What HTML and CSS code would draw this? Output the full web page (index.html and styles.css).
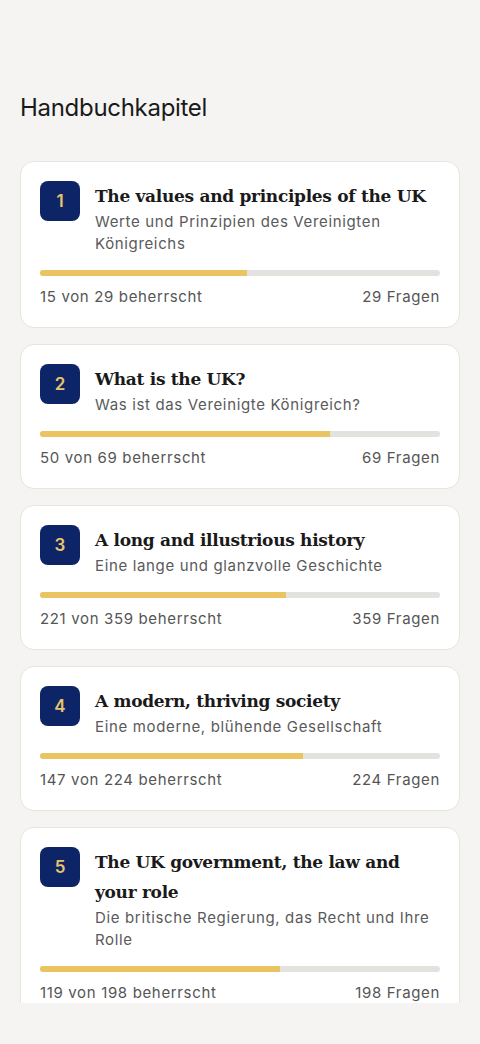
FILE: index.html
```html
<!DOCTYPE html>
<html lang="de">
<head>
<meta charset="utf-8">
<link rel="stylesheet" href="styles.css">
</head>
<body>
<div class="screen">
  <main class="scroll">
    <h1 class="heading">Handbuchkapitel</h1>
    <div class="list">
      <section class="card">
        <div class="head">
          <div class="badge">1</div>
          <div class="texts">
            <div class="title">The values and principles of the UK</div>
            <div class="sub">Werte und Prinzipien des Vereinigten Königreichs</div>
          </div>
        </div>
        <div class="bar"><div class="fill" style="width:51.72%"></div></div>
        <div class="foot"><span>15 von 29 beherrscht</span><span>29 Fragen</span></div>
      </section>
      <section class="card">
        <div class="head">
          <div class="badge">2</div>
          <div class="texts">
            <div class="title">What is the UK?</div>
            <div class="sub">Was ist das Vereinigte Königreich?</div>
          </div>
        </div>
        <div class="bar"><div class="fill" style="width:72.46%"></div></div>
        <div class="foot"><span>50 von 69 beherrscht</span><span>69 Fragen</span></div>
      </section>
      <section class="card">
        <div class="head">
          <div class="badge">3</div>
          <div class="texts">
            <div class="title">A long and illustrious history</div>
            <div class="sub">Eine lange und glanzvolle Geschichte</div>
          </div>
        </div>
        <div class="bar"><div class="fill" style="width:61.56%"></div></div>
        <div class="foot"><span>221 von 359 beherrscht</span><span>359 Fragen</span></div>
      </section>
      <section class="card">
        <div class="head">
          <div class="badge">4</div>
          <div class="texts">
            <div class="title">A modern, thriving society</div>
            <div class="sub">Eine moderne, blühende Gesellschaft</div>
          </div>
        </div>
        <div class="bar"><div class="fill" style="width:65.63%"></div></div>
        <div class="foot"><span>147 von 224 beherrscht</span><span>224 Fragen</span></div>
      </section>
      <section class="card">
        <div class="head">
          <div class="badge">5</div>
          <div class="texts">
            <div class="title">The UK government, the law and your role</div>
            <div class="sub">Die britische Regierung, das Recht und Ihre Rolle</div>
          </div>
        </div>
        <div class="bar"><div class="fill" style="width:60.1%"></div></div>
        <div class="foot"><span>119 von 198 beherrscht</span><span>198 Fragen</span></div>
      </section>
    </div>
  </main>
</div>
</body>
</html>
```
FILE: styles.css
```css
html, body {
  margin: 0;
  padding: 0;
  background: #f5f4f2;
}
body {
  font-family: Inter, "Noto Sans", sans-serif;
  color: #1c1c1c;
}
.screen {
  width: 480px;
  height: 1044px;
  display: flex;
  flex-direction: column;
}
.scroll {
  height: 1003px;
  overflow: hidden;
  padding: 92px 20px 0;
  box-sizing: border-box;
}
.heading {
  margin: 0;
  font-size: 24px;
  line-height: 32px;
  font-weight: 400;
  color: #1a1a1a;
  letter-spacing: -0.3px;
}
.list {
  margin-top: 37px;
  display: flex;
  flex-direction: column;
  gap: 16px;
}
.card {
  background: #fff;
  border: 1px solid #e7e4de;
  border-radius: 14px;
  padding: 19px 19px 19px 19px;
}
.head {
  display: flex;
  gap: 15px;
  align-items: flex-start;
}
.badge {
  flex: none;
  width: 40px;
  height: 40px;
  border-radius: 8px;
  background: #0d2466;
  color: #e8c56c;
  font-size: 17px;
  font-weight: 600;
  display: flex;
  align-items: center;
  justify-content: center;
}
.texts {
  flex: 1;
  min-width: 0;
}
.title {
  font-family: "DejaVu Serif", serif;
  font-weight: 700;
  font-size: 17px;
  line-height: 30px;
  color: #1a1a1a;
  letter-spacing: -0.3px;
}
.sub {
  font-size: 15px;
  line-height: 22px;
  color: #5a5a5a;
  letter-spacing: 0.65px;
}
.bar {
  margin-top: 15px;
  height: 6px;
  border-radius: 3px;
  background: #e4e2de;
  overflow: hidden;
}
.fill {
  height: 100%;
  background: #ebc462;
}
.foot {
  margin-top: 10px;
  display: flex;
  justify-content: space-between;
  font-size: 15px;
  line-height: 22px;
  color: #555;
  letter-spacing: 0.65px;
}
```
